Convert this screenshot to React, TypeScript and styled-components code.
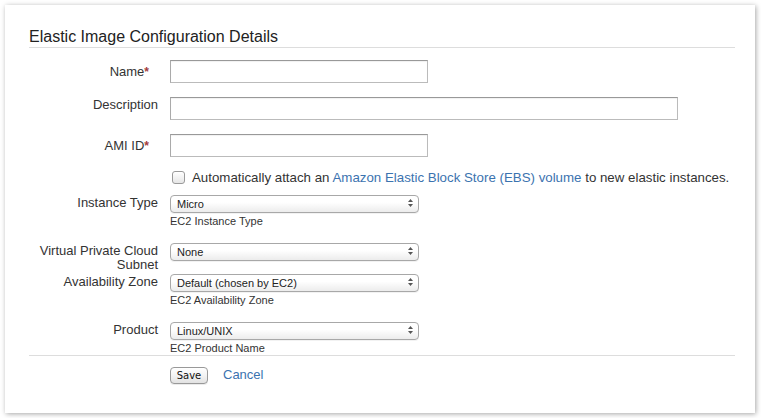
import React from "react";
import styled, { createGlobalStyle } from "styled-components";

const Global = createGlobalStyle`
  html, body { margin: 0; padding: 0; background: #fff; }
  body { font-family: "Liberation Sans", Arial, Helvetica, sans-serif; color: #333; }
  * { box-sizing: border-box; }
`;

const Page = styled.div`
  padding: 5px;
  width: 761px;
`;

const Panel = styled.section`
  width: 750px;
  background: #fff;
  box-shadow: 1px 1px 5px rgba(0, 0, 0, 0.35);
  padding: 22px 20px 29px 24px;
`;

const Title = styled.h2`
  margin: 0;
  font-size: 16px;
  font-weight: normal;
  line-height: 20px;
  color: #222;
  border-bottom: 1px solid #ddd;
`;

const Form = styled.form`
  display: flex;
  flex-direction: column;
`;

const FieldRow = styled.div<{ $mt: number }>`
  display: grid;
  grid-template-columns: 129px 1fr;
  column-gap: 12px;
  margin-top: ${(p) => p.$mt}px;
  align-items: start;
`;

const Label = styled.label<{ $h: number; $pt: number; $req?: boolean }>`
  text-align: right;
  font-size: 13px;
  line-height: 14px;
  color: #333;
  height: ${(p) => p.$h}px;
  padding-top: ${(p) => p.$pt}px;
  padding-right: ${(p) => (p.$req ? 9 : 0)}px;
  overflow: visible;
  white-space: normal;
`;

const Req = styled.span`
  color: #a33b3b;
  font-weight: bold;
  font-size: 12px;
`;

const Field = styled.div`
  display: flex;
  flex-direction: column;
  align-items: flex-start;
`;

const TextInput = styled.input<{ $w: number }>`
  width: ${(p) => p.$w}px;
  height: 23px;
  border: 1px solid #bbb;
  border-top-color: #999;
  border-left-color: #aaa;
  background: #fff;
  box-shadow: inset 0 1px 1px rgba(0, 0, 0, 0.06);
  margin: 0;
  padding: 2px 4px;
  font-family: inherit;
  font-size: 13px;
`;

const SelectWrap = styled.div`
  position: relative;
  width: 249px;
  height: 18px;
`;

const Select = styled.select`
  appearance: none;
  -webkit-appearance: none;
  width: 100%;
  height: 18px;
  margin: 0;
  border: 1px solid #a8a8a8;
  border-radius: 4px;
  background: linear-gradient(#fff, #fff 40%, #ececec);
  padding: 0 20px 0 6px;
  font-family: "Liberation Sans", Arial, sans-serif;
  font-size: 11px;
  line-height: 16px;
  color: #222;
  box-shadow: 0 1px 0 rgba(0, 0, 0, 0.05);
`;

const Arrows = styled.svg`
  position: absolute;
  right: 6px;
  top: 4px;
  pointer-events: none;
`;

const Help = styled.div`
  margin-top: 1px;
  font-size: 11px;
  line-height: 16px;
  color: #333;
`;

const CheckRow = styled.div`
  display: flex;
  align-items: center;
  margin-top: 10px;
  margin-left: 143px;
  height: 20px;
  font-size: 13.3px;
  color: #333;
`;

const Check = styled.input`
  appearance: none;
  -webkit-appearance: none;
  width: 13px;
  height: 13px;
  margin: 0 7px 0 0;
  border: 1px solid #9a9a9a;
  border-radius: 3px;
  background: linear-gradient(#fff, #e6e6e6);
  box-shadow: inset 0 1px 1px rgba(255, 255, 255, 0.8);
`;

const Link = styled.a`
  color: #3b73af;
  text-decoration: none;
`;

const Footer = styled.div`
  border-top: 1px solid #ddd;
  margin-top: -1px;
  padding: 11px 0 0 141px;
  display: flex;
  align-items: center;
  gap: 15px;
`;

const Button = styled.button`
  height: 17px;
  width: 38px;
  padding: 0;
  border: 1px solid #999;
  border-radius: 4px;
  background: linear-gradient(#fff, #f3f3f3 50%, #e2e2e2);
  font-family: "DejaVu Sans", "Lucida Grande", sans-serif;
  font-size: 10px;
  line-height: 15px;
  color: #111;
  box-shadow: 0 1px 0 rgba(0, 0, 0, 0.08);
`;

const CancelLink = styled(Link)`
  font-size: 13px;
  line-height: 18px;
  margin-top: -1px;
`;

const SelectBox = ({ value }: { value: string }) => (
  <SelectWrap>
    <Select defaultValue={value}>
      <option>{value}</option>
    </Select>
    <Arrows width="5" height="10" viewBox="0 0 5 10">
      <path d="M2.5 1 L5 4 L0 4 Z" fill="#555" />
      <path d="M0 6 L5 6 L2.5 9 Z" fill="#555" />
    </Arrows>
  </SelectWrap>
);

export default function App() {
  return (
    <Page>
      <Global />
      <Panel>
        <Title>Elastic Image Configuration Details</Title>
        <Form onSubmit={(e) => e.preventDefault()}>
          <FieldRow $mt={12}>
            <Label $h={23} $pt={5} $req>
              Name<Req>*</Req>
            </Label>
            <Field>
              <TextInput $w={258} />
            </Field>
          </FieldRow>
          <FieldRow $mt={14}>
            <Label $h={23} $pt={1}>
              Description
            </Label>
            <Field>
              <TextInput $w={508} />
            </Field>
          </FieldRow>
          <FieldRow $mt={14}>
            <Label $h={23} $pt={5} $req>
              AMI ID<Req>*</Req>
            </Label>
            <Field>
              <TextInput $w={258} />
            </Field>
          </FieldRow>
          <CheckRow>
            <Check type="checkbox" />
            <span>
              Automatically attach an{" "}
              <Link href="#">Amazon Elastic Block Store (EBS) volume</Link> to
              new elastic instances.
            </span>
          </CheckRow>
          <FieldRow $mt={7}>
            <Label $h={18} $pt={2}>
              Instance Type
            </Label>
            <Field>
              <SelectBox value="Micro" />
              <Help>EC2 Instance Type</Help>
            </Field>
          </FieldRow>
          <FieldRow $mt={13}>
            <Label $h={18} $pt={2}>
              Virtual Private Cloud Subnet
            </Label>
            <Field>
              <SelectBox value="None" />
            </Field>
          </FieldRow>
          <FieldRow $mt={13}>
            <Label $h={18} $pt={2}>
              Availability Zone
            </Label>
            <Field>
              <SelectBox value="Default (chosen by EC2)" />
              <Help>EC2 Availability Zone</Help>
            </Field>
          </FieldRow>
          <FieldRow $mt={13}>
            <Label $h={18} $pt={2}>
              Product
            </Label>
            <Field>
              <SelectBox value="Linux/UNIX" />
              <Help>EC2 Product Name</Help>
            </Field>
          </FieldRow>
          <Footer>
            <Button type="submit">Save</Button>
            <CancelLink href="#">Cancel</CancelLink>
          </Footer>
        </Form>
      </Panel>
    </Page>
  );
}
